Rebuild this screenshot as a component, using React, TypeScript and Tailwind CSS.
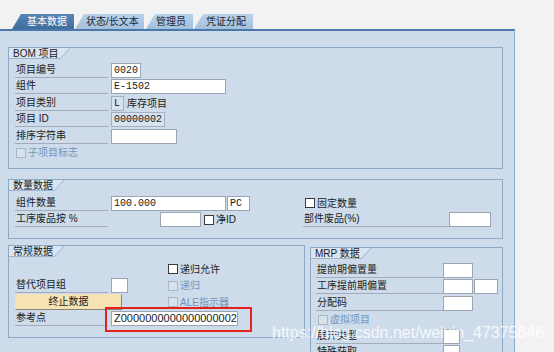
import React from "react";

const sans = "font-['Liberation_Sans','Noto_Sans_CJK_SC',sans-serif]";
const mono = "font-['Liberation_Mono','Noto_Sans_CJK_SC',monospace]";

function Tab({ label, active, className }: { label: string; active?: boolean; className: string }) {
  return (
    <div
      className={`h-[15px] [clip-path:polygon(9px_0,100%_0,100%_100%,0_100%)] leading-[15px] whitespace-nowrap ${
        active
          ? "bg-gradient-to-b from-[#5686b6] to-[#3e6d9d] text-white"
          : "bg-gradient-to-b from-[#b9d2ea] to-[#a3c0de] text-[#1c2735]"
      } ${className}`}
    >
      {label}
    </div>
  );
}

function Group({ title, className, children }: { title: string; className: string; children?: React.ReactNode }) {
  return (
    <div className={`border border-[#8ea9c6] ${className}`}>
      <div className="flex h-[11px]">
        <div className="bg-[#d9e5f1] border-b border-[#9db4cd] pl-[4px] pr-[1px] leading-[11px] whitespace-nowrap">
          {title}
        </div>
        <svg width="10" height="11" className="block">
          <polygon points="0,0 10,0 0,11" fill="#d9e5f1" />
          <line x1="10" y1="0" x2="0" y2="11" stroke="#9db4cd" strokeWidth="1" />
        </svg>
      </div>
      {children}
    </div>
  );
}

function Row({ children, className = "" }: { children?: React.ReactNode; className?: string }) {
  return <div className={`flex h-[16.5px] items-center ${className}`}>{children}</div>;
}

function Label({ text, w = "w-[93px]" }: { text: string; w?: string }) {
  return (
    <div className={`${w} h-[15px] border-b border-[#a3adb9] pl-[1px] leading-[14px] whitespace-nowrap`}>
      {text}
    </div>
  );
}

function Field({ value = "", w, ro, font = mono }: { value?: string; w: string; ro?: boolean; font?: string }) {
  return (
    <div
      className={`${w} h-[15px] border px-[2px] leading-[13px] text-[10px] whitespace-nowrap overflow-hidden ${font} ${
        ro ? "bg-[#d7e2ee] border-[#a4b1c0]" : "bg-white border-[#9ba6b2]"
      }`}
    >
      {value}
    </div>
  );
}

function Check({ label, disabled, className = "" }: { label: string; disabled?: boolean; className?: string }) {
  return (
    <div className={`flex items-center whitespace-nowrap ${className}`}>
      <span
        className={`w-[10px] h-[10px] border ${
          disabled ? "border-[#a9b8c9] bg-[#d8e2ed]" : "border-[#3a3a3a] bg-white"
        }`}
      />
      <span className={`ml-[2px] ${disabled ? "text-[#7096be]" : ""}`}>{label}</span>
    </div>
  );
}

export default function App() {
  return (
    <div className={`relative w-[554px] h-[352px] overflow-hidden bg-[#f2f2f2] text-[10px] text-[#1b1b1b] ${sans}`}>
      {/* Tabs */}
      <div className="flex h-[29px] items-end">
        <Tab label="基本数据" active className="ml-[12px] w-[62px] pl-[15px]" />
        <Tab label="状态/长文本" className="ml-[1px] w-[69px] pl-[11px]" />
        <Tab label="管理员" className="ml-[2px] w-[47px] pl-[10px]" />
        <Tab label="凭证分配" className="ml-[1px] w-[59px] pl-[12px]" />
      </div>

      {/* Panel */}
      <div className="w-[515px] h-[323px] border-t-2 border-r border-t-[#4a79a9] border-r-[#8aabcb] bg-[#cddbea] pt-[16px] pl-[8px]">
        <Group title="BOM 项目" className="w-[495px] h-[122px]">
          <div className="pt-[3px] pl-[6px]">
            <Row>
              <Label text="项目编号" />
              <div className="ml-[3px]"><Field value="0020" w="w-[30px]" /></div>
            </Row>
            <Row>
              <Label text="组件" />
              <div className="ml-[3px]"><Field value="E-1502" w="w-[115px]" /></div>
            </Row>
            <Row>
              <Label text="项目类别" />
              <div className="ml-[3px]"><Field value="L" w="w-[13px]" ro /></div>
              <span className="ml-[3px]">库存项目</span>
            </Row>
            <Row>
              <Label text="项目 ID" />
              <div className="ml-[3px]"><Field value="00000002" w="w-[54px]" ro /></div>
            </Row>
            <Row>
              <Label text="排序字符串" />
              <div className="ml-[3px]"><Field w="w-[66px]" /></div>
            </Row>
            <Row>
              <Check label="子项目标志" disabled className="ml-[1px]" />
            </Row>
          </div>
        </Group>

        <Group title="数量数据" className="mt-[10px] w-[495px] h-[60px]">
          <div className="pt-[4px] pl-[6px]">
            <Row>
              <div className="flex w-[288px] items-center">
                <Label text="组件数量" />
                <div className="ml-[3px]"><Field value="100.000" w="w-[115px]" /></div>
                <div className="ml-[1px]"><Field value="PC" w="w-[23px]" /></div>
              </div>
              <Check label="固定数量" className="ml-[2px]" />
            </Row>
            <Row>
              <div className="flex w-[288px] items-center">
                <Label text="工序废品按 %" />
                <div className="ml-[52px]"><Field w="w-[41px]" /></div>
                <Check label="净ID" className="ml-[3px]" />
              </div>
              <Label text="部件废品(%)" w="w-[146px]" />
              <Field w="w-[42px]" />
            </Row>
          </div>
        </Group>

        <div className="mt-[6px] flex items-start">
          <Group title="常规数据" className="w-[297px] h-[93px]">
            <div className="pt-[4px] pl-[6px]">
              <Row>
                <div className="w-[153px]" />
                <Check label="递归允许" />
              </Row>
              <Row>
                <div className="flex w-[153px] items-center">
                  <Label text="替代项目组" />
                  <div className="ml-[3px]"><Field w="w-[17px]" /></div>
                </div>
                <Check label="递归" disabled />
              </Row>
              <Row>
                <div className="w-[153px]">
                  <div className="w-[107px] h-[16px] border border-[#8a8570] border-t-[#efe3bd] border-l-[#efe3bd] bg-[#f6e3b3] text-center leading-[14px]">
                    终止数据
                  </div>
                </div>
                <Check label="ALE指示器" disabled />
              </Row>
              <Row>
                <Label text="参考点" />
                <div className="relative ml-[3px]">
                  <Field value="Z0000000000000000002" w="w-[127px]" font="font-['Liberation_Sans',sans-serif] text-[11px]" />
                  <div className="absolute left-[-6px] top-[-4px] w-[147px] h-[25px] border-2 border-[#e3201b]" />
                </div>
              </Row>
            </div>
          </Group>

          <Group title="MRP 数据" className="ml-[5px] mt-[2px] w-[193px] h-[120px]">
            <div className="pt-[3px] pl-[5px]">
              <Row>
                <Label text="提前期偏置量" w="w-[127px]" />
                <Field w="w-[30px]" />
              </Row>
              <Row>
                <Label text="工序提前期偏置" w="w-[127px]" />
                <Field w="w-[30px]" />
                <div className="ml-[1px]"><Field w="w-[24px]" /></div>
              </Row>
              <Row>
                <Label text="分配码" w="w-[127px]" />
                <Field w="w-[30px]" />
              </Row>
              <Row>
                <Check label="虚拟项目" disabled className="ml-[2px]" />
              </Row>
              <Row>
                <Label text="展开类型" w="w-[127px]" />
                <Field w="w-[17px]" />
              </Row>
              <Row>
                <Label text="特殊获取" w="w-[127px]" />
                <Field w="w-[17px]" />
              </Row>
            </div>
          </Group>
        </div>
      </div>

      {/* watermark */}
      <div className="absolute left-[272px] top-[325px] text-[16px] leading-[16px] text-white/80 font-['Liberation_Sans',sans-serif] whitespace-nowrap">
        https://blog.csdn.net/weixin_47375646
      </div>
    </div>
  );
}
